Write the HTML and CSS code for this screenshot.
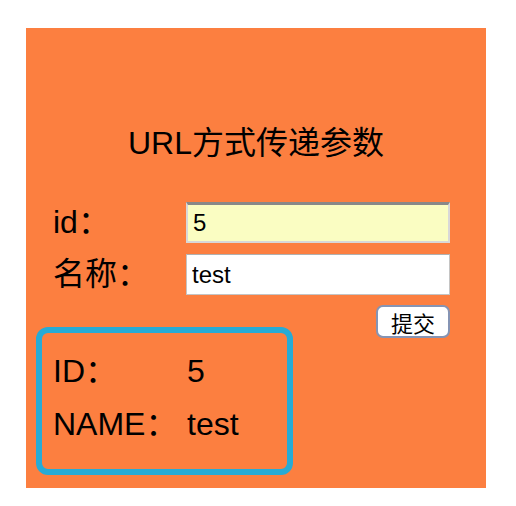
FILE: index.html
```html
<!DOCTYPE html>
<html lang="zh-CN">

<head>
    <meta charset="UTF-8">
    <meta name="viewport" content="width=device-width, initial-scale=1.0">
    <title>URL方式传递参数</title>
    <link rel="stylesheet" href="styles.css">
</head>

<body>

    <div class="panel">
        <h1 class="title">URL方式传递参数</h1>

        <form class="form">
            <div class="form-row">
                <label class="form-label" for="id">id：</label>
                <input class="form-input form-input-filled" id="id" type="text" value="5">
            </div>
            <div class="form-row">
                <label class="form-label" for="name">名称：</label>
                <input class="form-input" id="name" type="text" value="test">
            </div>
        </form>

        <div class="bottom">
            <div class="result">
                <div class="result-row">
                    <span class="result-label">ID：</span>
                    <span class="result-value">5</span>
                </div>
                <div class="result-row">
                    <span class="result-label">NAME：</span>
                    <span class="result-value">test</span>
                </div>
            </div>
            <button class="submit" type="button">提交</button>
        </div>
    </div>

</body>

</html>
```

FILE: styles.css
```css
body {
    margin: 0;
    font-family: 'Liberation Sans', Arial, 'Noto Sans CJK SC', sans-serif;
    color: #000;
}

.panel {
    width: 460px;
    height: 460px;
    margin: 28px 0 0 26px;
    padding-top: 97px;
    box-sizing: border-box;
    background-color: #fc7f40;
}

.title {
    margin: 0;
    font-size: 32px;
    font-weight: normal;
    line-height: 37px;
    text-align: center;
}

.form {
    margin: 40px 36px 0 27px;
}

.form-row {
    display: flex;
    align-items: center;
    margin-bottom: 11px;
}

.form-row:last-child {
    margin-bottom: 0;
}

.form-label {
    width: 133px;
    font-size: 32px;
    line-height: 41px;
}

.form-input {
    width: 264px;
    height: 41px;
    box-sizing: border-box;
    padding: 0 5px;
    font-family: inherit;
    font-size: 24px;
    border: 1px solid #c4c4c4;
    border-top-color: #b0b0b0;
    outline: 1px solid #fff;
    outline-offset: -2px;
    background-color: #fff;
}

.form-input-filled {
    background-color: #fafdc2;
    border: 2px solid #d8d8d8;
    border-top: 3px solid #888;
    outline: none;
}

.bottom {
    display: flex;
    justify-content: space-between;
    align-items: flex-start;
    margin: 10px 36px 0 10px;
}

.result {
    width: 257px;
    height: 148px;
    box-sizing: border-box;
    margin-top: 22px;
    padding: 12px 0 0 11px;
    border: 6px solid #28abd5;
    border-radius: 12px;
}

.result-row {
    display: flex;
    font-size: 32px;
    line-height: 53px;
}

.result-label {
    width: 134px;
}

.submit {
    width: 74px;
    height: 33px;
    padding: 0;
    font-family: 'Noto Sans CJK SC', sans-serif;
    font-size: 22px;
    line-height: 1;
    background-color: #fff;
    border: 2px solid #8594b4;
    border-radius: 7px;
}
```
